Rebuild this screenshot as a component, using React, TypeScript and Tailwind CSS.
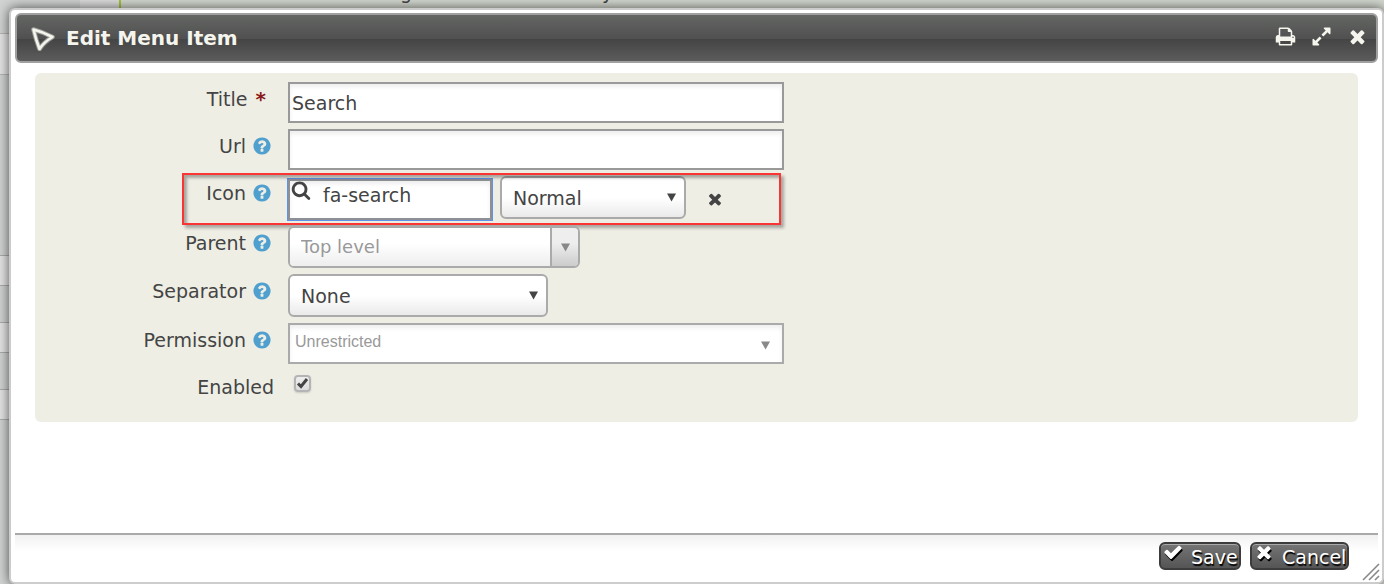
import { useState } from "react";
import type { ReactNode } from "react";

const icons = {
  search:
    "M1216 832q0-185-131.5-316.5t-316.5-131.5-316.5 131.5-131.5 316.5 131.5 316.5 316.5 131.5 316.5-131.5 131.5-316.5zm512 832q0 52-38 90t-90 38q-54 0-90-38l-343-342q-179 124-399 124-143 0-273.5-55.5t-225-150-150-225-55.5-273.5 55.5-273.5 150-225 225-150 273.5-55.5 273.5 55.5 225 150 150 225 55.5 273.5q0 220-124 399l343 343q37 37 37 90z",
  print:
    "M448 1536h896v-256h-896v256zm0-640h896v-384h-160q-40 0-68-28t-28-68v-160h-640v640zm1152 64q0-26-19-45t-45-19-45 19-19 45 19 45 45 19 45-19 19-45zm128 0v416q0 13-9.5 22.5t-22.5 9.5h-224v160q0 40-28 68t-68 28h-960q-40 0-68-28t-28-68v-160h-224q-13 0-22.5-9.5t-9.5-22.5v-416q0-79 56.5-135.5t135.5-56.5h64v-544q0-40 28-68t68-28h672q40 0 88 20t76 48l152 152q28 28 48 76t20 88v256h64q79 0 135.5 56.5t56.5 135.5z",
  expand:
    "M883 1056q0 13-10 23l-332 332 144 144q19 19 19 45t-19 45-45 19h-448q-26 0-45-19t-19-45v-448q0-26 19-45t45-19 45 19l144 144 332-332q10-10 23-10t23 10l114 114q10 10 10 23zm781-864v448q0 26-19 45t-45 19-45-19l-144-144-332 332q-10 10-23 10t-23-10l-114-114q-10-10-10-23t10-23l332-332-144-144q-19-19-19-45t19-45 45-19h448q26 0 45 19t19 45z",
  times:
    "M1490 1322q0 40-28 68l-136 136q-28 28-68 28t-68-28l-294-294-294 294q-28 28-68 28t-68-28l-136-136q-28-28-28-68t28-68l294-294-294-294q-28-28-28-68t28-68l136-136q28-28 68-28t68 28l294 294 294-294q28-28 68-28t68 28l136 136q28 28 28 68t-28 68l-294 294 294 294q28 28 28 68z",
  check:
    "M1671 566q0 40-28 68l-724 724-136 136q-28 28-68 28t-68-28l-136-136-362-362q-28-28-28-68t28-68l136-136q28-28 68-28t68 28l294 295 656-657q28-28 68-28t68 28l136 136q28 28 28 68z",
  help: "M1024 1376v-192q0-14-9-23t-23-9h-192q-14 0-23 9t-9 23v192q0 14 9 23t23 9h192q14 0 23-9t9-23zm256-672q0-88-55.5-163t-138.5-116-170-41q-243 0-371 213-15 24 8 42l132 100q7 6 19 6 16 0 25-12 53-68 86-92 34-24 86-24 48 0 85.5 26t37.5 59q0 38-20 61t-68 45q-63 28-115.5 86.5t-52.5 125.5v36q0 14 9 23t23 9h192q14 0 23-9t9-23q0-19 21.5-49.5t54.5-49.5q32-18 49-28.5t46-35 44.5-48 28-60.5 12.5-81zm384 192q0 209-103 385.5t-279.5 279.5-385.5 103-385.5-103-279.5-279.5-103-385.5 103-385.5 279.5-279.5 385.5-103 385.5 103 279.5 279.5 103 385.5z",
};

function Icon({ name, className }: { name: keyof typeof icons; className: string }) {
  return (
    <svg viewBox="0 0 1792 1792" fill="currentColor" aria-hidden="true" className={className}>
      <path d={icons[name]} />
    </svg>
  );
}

function Caret({ className }: { className: string }) {
  return (
    <svg viewBox="0 0 10 10" fill="currentColor" aria-hidden="true" className={className}>
      <path d="M0 0.5H10L5 9.5Z" />
    </svg>
  );
}

type RowProps = {
  id: string;
  label: string;
  mark?: "help" | "required";
  highlight?: boolean;
  children: ReactNode;
};

function Row({ id, label, mark, highlight, children }: RowProps) {
  return (
    <div className="relative flex items-start gap-3.5">
      <div className="flex h-[34px] w-[239px] shrink-0 items-center justify-end">
        <label htmlFor={id}>{label}</label>
        {mark === "help" && (
          <button type="button" aria-label={`Help for ${label}`} className="ml-1.5 mr-0.5 text-[#4f9fcf]">
            <Icon name="help" className="size-5" />
          </button>
        )}
        {mark === "required" && <span className="ml-2 mr-2 text-xl font-bold text-[#8b1a1a]">*</span>}
      </div>
      <div className="flex min-w-0 flex-1 items-start">{children}</div>
      {highlight && (
        <div className="pointer-events-none absolute -top-[3px] left-[147px] h-[52px] w-[599px] border-2 border-[#fb3434] shadow-[3px_3px_3px_rgba(0,0,0,0.3),inset_3px_3px_3px_rgba(0,0,0,0.3)]" />
      )}
    </div>
  );
}

const field = "border-2 border-[#999] bg-white px-0.5 outline-none shadow-[inset_0_3px_4px_#eee]";
const select =
  "w-full appearance-none rounded-md border-2 border-[#aaa] bg-linear-to-b from-white from-50% to-[#eaeaea] pl-[11px] outline-none";
const footerButton =
  "flex h-7 items-center rounded-md border-2 border-[#3c3c3c] bg-linear-to-b from-[#757575] to-[#555] text-white shadow-[inset_0_1px_0_#aaa] [text-shadow:1px_2px_1px_#000]";

function Backdrop() {
  return (
    <div aria-hidden="true" className="col-start-1 row-start-1 flex bg-[#d3d8cf]">
      <div className="w-20 bg-[#d0d3d2]">
        <div className="h-[34px] border-b border-[#b5b5b0]" />
        <div className="h-[41px] border-b border-[#b5b5b0] bg-[#e3e3e3]" />
        <div className="h-[181px] border-b border-[#aaa]" />
        <div className="h-[30px] border-b border-[#aaa] bg-[#e3e3e3]" />
        <div className="h-[37px] border-b border-[#aaa]" />
        <div className="h-[30px] border-b border-[#aaa] bg-[#e3e3e3]" />
        <div className="h-[37px] border-b border-[#aaa]" />
        <div className="h-[30px] border-b border-[#aaa] bg-[#e3e3e3]" />
      </div>
      <div className="w-[41px] border-r-2 border-[#a4c63c] bg-[#dcdcdc]" />
      <div className="-mt-5 flex h-6 pl-[279px]">
        <span className="w-[202px]">g</span>
        <span>y</span>
      </div>
    </div>
  );
}

export default function App() {
  const [title, setTitle] = useState("Search");
  const [url, setUrl] = useState("");
  const [icon, setIcon] = useState("fa-search");

  return (
    <div className="grid min-h-screen overflow-hidden font-['Verdana','DejaVu_Sans',sans-serif] text-[19px] leading-6 text-[#444]">
      <Backdrop />
      <div
        role="dialog"
        aria-labelledby="dialog-title"
        className="col-start-1 row-start-1 mt-2 ml-[9px] flex flex-col rounded-md border-2 border-[#ccc] bg-white px-1 pt-[3px] shadow-[0_0_12px_rgba(0,0,0,0.65)]"
      >
        <header className="flex h-[50px] shrink-0 items-center rounded-md border-2 border-[#a0a0a0] bg-[linear-gradient(#646664,#4f504f_52%,#444_52%,#5c5c5c)] pr-2 pl-3 text-[#f5f5ee]">
          <svg viewBox="0 0 26 26" className="size-[26px]" fill="none" stroke="currentColor" aria-hidden="true">
            <path
              d="M4.5 4.5Q14 7 23.5 12Q15 17 10.5 24Q7 15 4.5 4.5Z"
              strokeOpacity="0.45"
              strokeWidth="4.6"
              strokeLinejoin="round"
            />
            <path
              d="M4.5 4.5Q14 7 23.5 12Q15 17 10.5 24Q7 15 4.5 4.5Z"
              strokeWidth="2.6"
              strokeLinejoin="round"
            />
          </svg>
          <h1 id="dialog-title" className="ml-[11px] flex-1 text-xl font-bold">
            Edit Menu Item
          </h1>
          <div className="flex items-center gap-[15px] pb-1">
            <button type="button" aria-label="Print">
              <Icon name="print" className="size-[21px]" />
            </button>
            <button type="button" aria-label="Expand">
              <Icon name="expand" className="size-[21px]" />
            </button>
            <button type="button" aria-label="Close">
              <Icon name="times" className="size-[21px]" />
            </button>
          </div>
        </header>

        <form
          id="menu-item"
          onSubmit={(e) => e.preventDefault()}
          className="mx-5 mt-2.5 flex flex-col gap-1.5 rounded-md bg-[#eeeee5] pt-[9px] pb-[18px]"
        >
          <Row id="title" label="Title" mark="required">
            <input
              id="title"
              value={title}
              onChange={(e) => setTitle(e.target.value)}
              className={`${field} h-[41px] w-full max-w-[496px]`}
            />
          </Row>
          <Row id="url" label="Url" mark="help">
            <input
              id="url"
              value={url}
              onChange={(e) => setUrl(e.target.value)}
              className={`${field} h-[41px] w-full max-w-[496px]`}
            />
          </Row>
          <Row id="icon" label="Icon" mark="help" highlight>
            <div className="flex h-11 items-start">
              <div className="relative pt-[3px]">
                <Icon name="search" className="absolute top-1 left-[3px] size-5" />
                <input
                  id="icon"
                  value={icon}
                  onChange={(e) => setIcon(e.target.value)}
                  className="h-[41px] w-[204px] border-2 border-[#8f9096] bg-white pb-2.5 pl-[33px] ring-1 ring-[#5f93ea] shadow-[inset_0_3px_4px_#eee] outline-none"
                />
              </div>
              <div className="relative ml-2 w-[186px]">
                <select aria-label="Icon size" className={`${select} h-[43px]`}>
                  <option>Normal</option>
                </select>
                <Caret className="pointer-events-none absolute top-[17px] right-2.5 size-[9px]" />
              </div>
              <button type="button" aria-label="Clear icon" className="mt-3.5 ml-5">
                <Icon name="times" className="size-[18px]" />
              </button>
            </div>
          </Row>
          <Row id="parent" label="Parent" mark="help">
            <div className="flex h-[42px] w-[292px] overflow-hidden rounded-md border-2 border-[#aaa]">
              <input
                id="parent"
                placeholder="Top level"
                className="min-w-0 flex-1 bg-linear-to-b from-white from-40% to-[#eee] pl-[11px] text-[18px] outline-none placeholder:text-[#999]"
              />
              <button
                type="button"
                aria-label="Show parents"
                className="flex w-7 items-center justify-center border-l-2 border-[#aaa] bg-linear-to-b from-[#eee] from-40% to-[#ccc] text-[#888]"
              >
                <Caret className="size-[9px]" />
              </button>
            </div>
          </Row>
          <Row id="separator" label="Separator" mark="help">
            <div className="relative w-[260px]">
              <select id="separator" className={`${select} block h-[43px]`}>
                <option>None</option>
              </select>
              <Caret className="pointer-events-none absolute top-[17px] right-2.5 size-[9px]" />
            </div>
          </Row>
          <Row id="permission" label="Permission" mark="help">
            <div className="relative w-full max-w-[496px]">
              <input
                id="permission"
                placeholder="Unrestricted"
                className="block h-[41px] w-full border-2 border-[#aaa] bg-white pb-1 pl-[5px] font-['Liberation_Sans',Arial,sans-serif] text-base shadow-[inset_0_3px_4px_#eee] outline-none placeholder:text-[#999]"
              />
              <Caret className="pointer-events-none absolute top-[18px] right-3.5 size-[9px] text-[#888]" />
            </div>
          </Row>
          <Row id="enabled" label="Enabled">
            <div className="relative mt-[5px] ml-1.5 flex">
              <input
                id="enabled"
                type="checkbox"
                defaultChecked
                className="peer size-[17px] appearance-none rounded-sm border-2 border-[#b4b4b4] bg-linear-to-b from-[#eee] to-[#ddd] shadow-[0_1px_2px_rgba(0,0,0,0.15)]"
              />
              <svg
                viewBox="0 0 17 17"
                fill="none"
                stroke="currentColor"
                aria-hidden="true"
                className="pointer-events-none absolute inset-0 hidden size-[17px] peer-checked:block"
              >
                <path d="M4 8.5L7 11.5L13 4" strokeWidth="3" />
              </svg>
            </div>
          </Row>
        </form>

        <footer className="relative mt-auto flex h-[49px] shrink-0 items-start justify-end gap-[9px] border-t-2 border-[#aaa] bg-linear-to-b from-[#f1f1f1] to-white to-[16px] pt-[7px] pr-[29px]">
          <button type="submit" form="menu-item" className={`${footerButton} w-[82px]`}>
            <Icon name="check" className="mb-2 ml-0.5 size-5 shrink-0 drop-shadow-[1px_2px_0_#000]" />
            <span className="mt-0.5 ml-2">Save</span>
          </button>
          <button type="button" className={`${footerButton} w-[99px]`}>
            <Icon name="times" className="mb-2 ml-0.5 size-5 shrink-0 drop-shadow-[1px_2px_0_#000]" />
            <span className="mt-0.5 ml-2">Cancel</span>
          </button>
          <svg
            viewBox="0 0 18 18"
            stroke="#888"
            strokeWidth="1.6"
            aria-hidden="true"
            className="absolute -right-0.5 bottom-px size-[18px]"
          >
            <path d="M1 17L17 1M7 17L17 7M13 17L17 13" />
          </svg>
        </footer>
      </div>
    </div>
  );
}
